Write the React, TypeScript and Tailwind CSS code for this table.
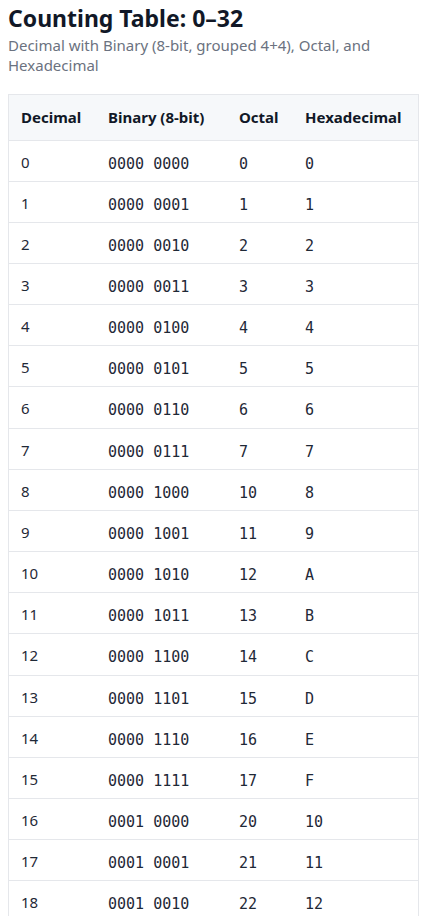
import React from "react";

const rows = Array.from({ length: 33 }, (_, i) => {
  const b = i.toString(2).padStart(8, "0");
  return {
    d: String(i),
    b: b.slice(0, 4) + " " + b.slice(4),
    o: i.toString(8),
    h: i.toString(16).toUpperCase(),
  };
});

export default function App() {
  return (
    <div
      className="bg-white px-2 pt-[2px] text-[#1f2937]"
      style={{ fontFamily: '"Noto Sans", "Open Sans", sans-serif' }}
    >
      <h1 className="text-[23px] font-bold leading-[32px] text-[#111827]">Counting Table: 0–32</h1>
      <p className="mt-[1px] text-[15px] leading-[20px] text-[#6b7280]">
        Decimal with Binary (8-bit, grouped 4+4), Octal, and Hexadecimal
      </p>
      <div className="mt-[19px] w-[411px] border border-[#e5e7eb]">
        <table className="w-full border-collapse text-left">
          <colgroup>
            <col className="w-[87px]" />
            <col className="w-[131px]" />
            <col className="w-[66px]" />
            <col />
          </colgroup>
          <thead>
            <tr className="bg-[#f6f8fa]">
              <th className="h-[45px] px-3 text-[15px] font-bold text-[#111827]">Decimal</th>
              <th className="px-3 text-[15px] font-bold text-[#111827]">Binary (8-bit)</th>
              <th className="px-3 text-[15px] font-bold text-[#111827]">Octal</th>
              <th className="px-3 text-[15px] font-bold text-[#111827]">Hexadecimal</th>
            </tr>
          </thead>
          <tbody>
            {rows.map((r) => (
              <tr key={r.d} className="border-t border-[#e5e7eb]">
                <td className="h-[41.17px] px-3 pt-[10px] align-top text-[15px] leading-[22px]">{r.d}</td>
                <td className="px-3 pt-[12px] align-top text-[15px] leading-[22px]" style={{ fontFamily: '"DejaVu Sans Mono", monospace' }}>{r.b}</td>
                <td className="px-3 pt-[12px] align-top text-[15px] leading-[22px]" style={{ fontFamily: '"DejaVu Sans Mono", monospace' }}>{r.o}</td>
                <td className="px-3 pt-[12px] align-top text-[15px] leading-[22px]" style={{ fontFamily: '"DejaVu Sans Mono", monospace' }}>{r.h}</td>
              </tr>
            ))}
          </tbody>
        </table>
      </div>
    </div>
  );
}
